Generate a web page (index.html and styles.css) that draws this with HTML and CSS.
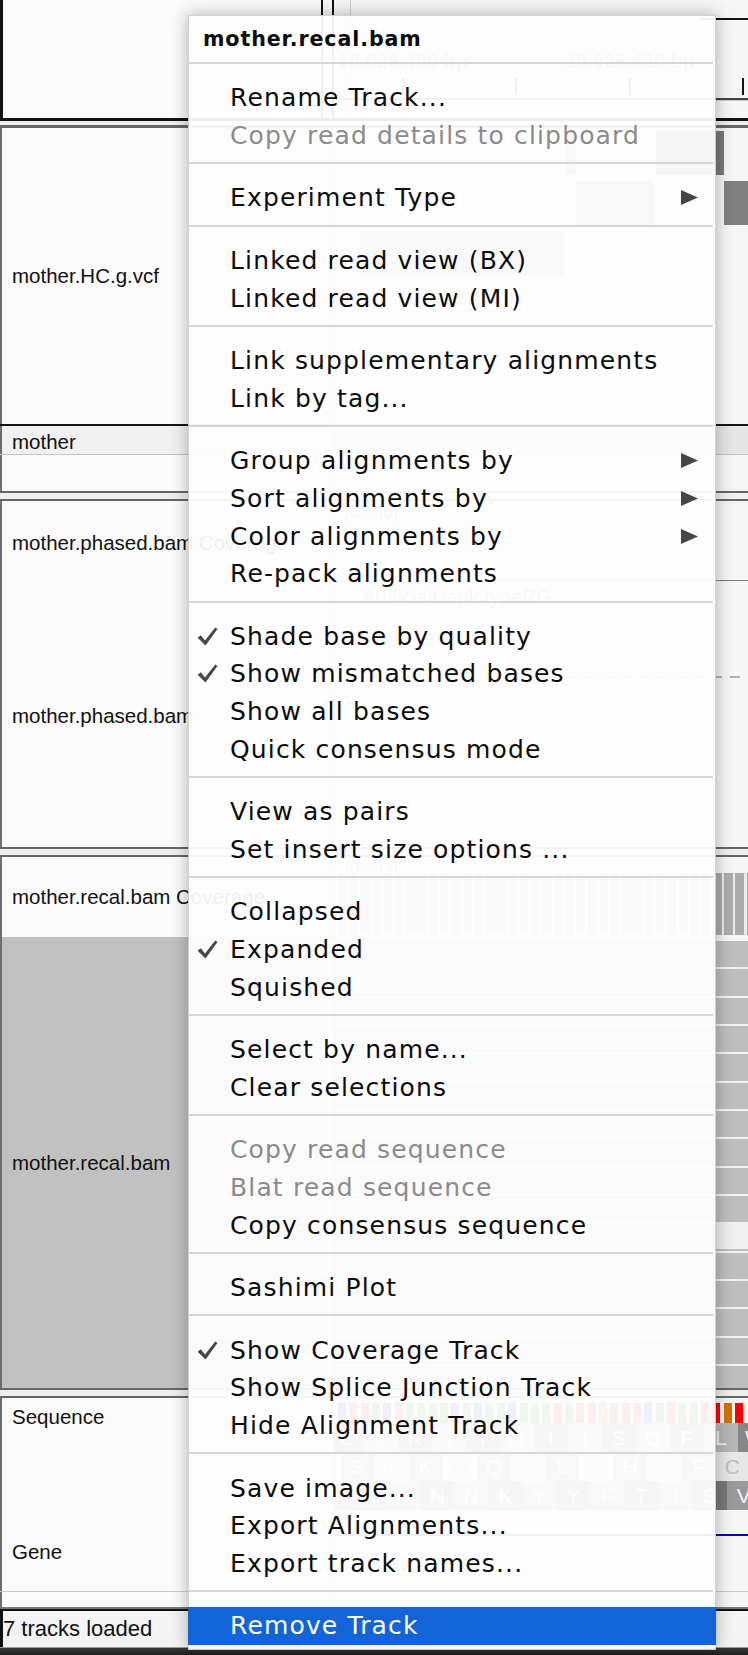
FILE: index.html
```html
<!DOCTYPE html>
<html lang="en">
<head>
<meta charset="utf-8">
<title>IGV – track menu</title>
<link rel="stylesheet" href="styles.css">
</head>
<body>
<div class="app">

  <section class="panel ruler-panel">
    <div class="track ruler-track">
      <div class="names"></div>
      <div class="attr"></div>
      <div class="data">
        <div class="data-edge"></div>
        <div class="ruler-box"></div>
        <span class="tick-label tl-1">10.026.400 bp</span>
        <span class="tick-label tl-2">10.026.420 bp</span>
        <i class="tick tk-1"></i><i class="tick tk-2"></i><i class="tick tk-3"></i><i class="tick tk-4"></i>
        <div class="ruler-line"></div>
      </div>
    </div>
  </section>
  <div class="gap gap-s"></div>

  <section class="panel vcf-panel">
    <div class="track vcf-track">
      <div class="names"><span>mother.HC.g.vcf</span></div>
      <div class="attr"></div>
      <div class="data">
        <i class="blk b1"></i><i class="blk b2"></i><i class="blk b3"></i><i class="blk b4"></i><i class="blk b5"></i>
      </div>
    </div>
    <div class="track sample-row">
      <div class="names"><span>mother</span></div>
      <div class="attr"></div>
      <div class="data"></div>
    </div>
    <div class="track blank-row">
      <div class="names"></div>
      <div class="attr"></div>
      <div class="data"></div>
    </div>
  </section>
  <div class="gap"></div>

  <section class="panel">
    <div class="track cov-track">
      <div class="names"><span>mother.phased.bam Coverage</span></div>
      <div class="attr"></div>
      <div class="data">
        <span class="range">[0 - 46]</span>
        <div class="cov-line"></div>
      </div>
    </div>
    <div class="track phased-aln">
      <div class="names"><span>mother.phased.bam</span></div>
      <div class="attr"></div>
      <div class="data">
        <span class="rg-label">ArtificialHaplotypeRG</span>
        <div class="dashed"></div>
      </div>
    </div>
  </section>
  <div class="gap"></div>

  <section class="panel">
    <div class="track recal-cov">
      <div class="names"><span>mother.recal.bam Coverage</span></div>
      <div class="attr"></div>
      <div class="data">
        <span class="range">[0 - 44]</span>
        <div class="covbars"></div>
      </div>
    </div>
    <div class="track recal-aln">
      <div class="names selected"><span>mother.recal.bam</span></div>
      <div class="attr"></div>
      <div class="data">
        <div class="reads"></div>
        <div class="read-hole"></div>
      </div>
    </div>
  </section>
  <div class="gap"></div>

  <section class="panel seq-panel">
    <div class="track seq-track">
      <div class="names top"><span>Sequence</span></div>
      <div class="attr"></div>
      <div class="data">
        <div class="bases">
          <i class="b c"></i><i class="b t"></i><i class="b t"></i><i class="b a"></i><i class="b c"></i><i class="b t"></i><i class="b a"></i><i class="b a"></i><i class="b a"></i><i class="b a"></i><i class="b c"></i><i class="b a"></i><i class="b c"></i><i class="b a"></i><i class="b a"></i><i class="b c"></i><i class="b a"></i><i class="b a"></i><i class="b a"></i><i class="b t"></i><i class="b a"></i><i class="b t"></i><i class="b t"></i><i class="b g"></i><i class="b t"></i><i class="b t"></i><i class="b t"></i><i class="b c"></i><i class="b a"></i><i class="b t"></i><i class="b a"></i><i class="b a"></i><i class="b t"></i><i class="b t"></i><i class="b g"></i><i class="b t"></i>
        </div>
        <div class="frames">
          <div class="frame f1"><span>E</span><span>L</span><span>K</span><span>T</span><span>T</span><span>N</span><span>I</span><span>I</span><span>S</span><span>Q</span><span>F</span><span>L</span><span>W</span></div>
          <div class="frame f2"><span></span><span>S</span><span>L</span><span>K</span><span>Q</span><span>Q</span><span>I</span><span>L</span><span>F</span><span>H</span><span>N</span><span>F</span><span>C</span></div>
          <div class="frame f3"><span></span><span>K</span><span>F</span><span>N</span><span>N</span><span>K</span><span>Y</span><span>Y</span><span>F</span><span>T</span><span>I</span><span>S</span><span>V</span></div>
        </div>
      </div>
    </div>
    <div class="track gene-track">
      <div class="names"><span>Gene</span></div>
      <div class="attr"></div>
      <div class="data"><div class="gene-line"></div></div>
    </div>
    <div class="track seq-tail">
      <div class="names"></div>
      <div class="attr"></div>
      <div class="data"></div>
    </div>
  </section>

  <footer class="status">
    <div class="st st1">7 tracks loaded</div>
    <div class="st st2">chr14:10.026.397</div>
    <div class="st st3"></div>
  </footer>
  <div class="desk"></div>
</div>

<div class="menu">
  <div class="mtitle">mother.recal.bam</div>
  <div class="sep"></div>
  <div class="item"><span class="gutter"></span><span class="label">Rename Track...</span></div>
  <div class="item disabled"><span class="gutter"></span><span class="label">Copy read details to clipboard</span></div>
  <div class="sep"></div>
  <div class="item"><span class="gutter"></span><span class="label">Experiment Type</span><svg class="arrow" width="17" height="15" viewBox="0 0 17 15"><polygon points="0,0 17,7.5 0,15"/></svg></div>
  <div class="sep"></div>
  <div class="item"><span class="gutter"></span><span class="label">Linked read view (BX)</span></div>
  <div class="item"><span class="gutter"></span><span class="label">Linked read view (MI)</span></div>
  <div class="sep"></div>
  <div class="item"><span class="gutter"></span><span class="label">Link supplementary alignments</span></div>
  <div class="item"><span class="gutter"></span><span class="label">Link by tag...</span></div>
  <div class="sep"></div>
  <div class="item"><span class="gutter"></span><span class="label">Group alignments by</span><svg class="arrow" width="17" height="15" viewBox="0 0 17 15"><polygon points="0,0 17,7.5 0,15"/></svg></div>
  <div class="item"><span class="gutter"></span><span class="label">Sort alignments by</span><svg class="arrow" width="17" height="15" viewBox="0 0 17 15"><polygon points="0,0 17,7.5 0,15"/></svg></div>
  <div class="item"><span class="gutter"></span><span class="label">Color alignments by</span><svg class="arrow" width="17" height="15" viewBox="0 0 17 15"><polygon points="0,0 17,7.5 0,15"/></svg></div>
  <div class="item"><span class="gutter"></span><span class="label">Re-pack alignments</span></div>
  <div class="sep"></div>
  <div class="item"><span class="gutter"><svg class="check" width="21" height="19" viewBox="0 0 20 18"><path d="M0.6 10.2 L3.6 7.8 L7.6 12.8 L17.4 0.4 L19.5 1.9 L8.1 17.5 Z"/></svg></span><span class="label">Shade base by quality</span></div>
  <div class="item"><span class="gutter"><svg class="check" width="21" height="19" viewBox="0 0 20 18"><path d="M0.6 10.2 L3.6 7.8 L7.6 12.8 L17.4 0.4 L19.5 1.9 L8.1 17.5 Z"/></svg></span><span class="label">Show mismatched bases</span></div>
  <div class="item"><span class="gutter"></span><span class="label">Show all bases</span></div>
  <div class="item"><span class="gutter"></span><span class="label">Quick consensus mode</span></div>
  <div class="sep"></div>
  <div class="item"><span class="gutter"></span><span class="label">View as pairs</span></div>
  <div class="item"><span class="gutter"></span><span class="label">Set insert size options ...</span></div>
  <div class="sep"></div>
  <div class="item"><span class="gutter"></span><span class="label">Collapsed</span></div>
  <div class="item"><span class="gutter"><svg class="check" width="21" height="19" viewBox="0 0 20 18"><path d="M0.6 10.2 L3.6 7.8 L7.6 12.8 L17.4 0.4 L19.5 1.9 L8.1 17.5 Z"/></svg></span><span class="label">Expanded</span></div>
  <div class="item"><span class="gutter"></span><span class="label">Squished</span></div>
  <div class="sep"></div>
  <div class="item"><span class="gutter"></span><span class="label">Select by name...</span></div>
  <div class="item"><span class="gutter"></span><span class="label">Clear selections</span></div>
  <div class="sep"></div>
  <div class="item disabled"><span class="gutter"></span><span class="label">Copy read sequence</span></div>
  <div class="item disabled"><span class="gutter"></span><span class="label">Blat read sequence</span></div>
  <div class="item"><span class="gutter"></span><span class="label">Copy consensus sequence</span></div>
  <div class="sep"></div>
  <div class="item"><span class="gutter"></span><span class="label">Sashimi Plot</span></div>
  <div class="sep"></div>
  <div class="item"><span class="gutter"><svg class="check" width="21" height="19" viewBox="0 0 20 18"><path d="M0.6 10.2 L3.6 7.8 L7.6 12.8 L17.4 0.4 L19.5 1.9 L8.1 17.5 Z"/></svg></span><span class="label">Show Coverage Track</span></div>
  <div class="item"><span class="gutter"></span><span class="label">Show Splice Junction Track</span></div>
  <div class="item"><span class="gutter"></span><span class="label">Hide Alignment Track</span></div>
  <div class="sep"></div>
  <div class="item"><span class="gutter"></span><span class="label">Save image...</span></div>
  <div class="item"><span class="gutter"></span><span class="label">Export Alignments...</span></div>
  <div class="item"><span class="gutter"></span><span class="label">Export track names...</span></div>
  <div class="sep"></div>
  <div class="item active"><span class="gutter"></span><span class="label">Remove Track</span></div>
</div>
</body>
</html>
```

FILE: styles.css
```css
* { box-sizing: border-box; margin: 0; padding: 0; }
html, body { width: 748px; height: 1655px; overflow: hidden; }
body {
  position: relative;
  background: #2b2b2b;
  font-family: "Liberation Sans", Arial, sans-serif;
  color: #111;
}

/* ---------- IGV window background ---------- */
.app {
  width: 748px;
  height: 1655px;
  display: flex;
  flex-direction: column;
  background: #ececec;
}
.panel { display: flex; flex-direction: column; flex: none; border-top: 2px solid #666; border-bottom: 2px solid #666; }
.gap { height: 6px; flex: none; background: #efefef; }
.gap-s { height: 4px; }
.track { display: flex; flex: none; }
.names {
  width: 321px;
  flex: none;
  display: flex;
  align-items: center;
  padding-left: 10px;
  background: #fafafa;
  border-left: 2px solid #6e6e6e;
  font-size: 20.5px;
  white-space: nowrap;
}
.names.top { align-items: flex-start; padding-top: 7px; }
.names.selected { background: #c1c1c1; }
.attr { width: 13px; flex: none; background: #f8f8f8; border-right: 1px solid #bdbdbd; }
.data { flex: 1; position: relative; overflow: hidden; background: #f6f6f6; }

/* ruler */
.ruler-panel { border-top: 0; border-bottom: 3px solid #111; }
.ruler-track { height: 118px; }
.ruler-panel .names { border-left: 3px solid #111; }
.ruler-panel .attr { border-left: 2px solid #111; border-right: 2px solid #111; background: #f7f7f7; }
.data-edge { position: absolute; left: 16px; top: 0; bottom: 0; width: 1px; background: #cfcfcf; }
.ruler-box { position: absolute; left: 366px; right: 0; top: 18px; height: 2px; background: #111; }
.tick-label {
  position: absolute; top: 50px;
  transform: translateX(-50%);
  font-size: 20px; font-weight: bold; color: #9a9a9a; white-space: nowrap;
}
.tl-1 { left: 69px; }
.tl-2 { left: 296px; }
.tick { position: absolute; top: 78px; width: 2px; height: 17px; background: #111; }
.tk-1 { left: 68px; } .tk-2 { left: 181px; } .tk-3 { left: 295px; } .tk-4 { left: 408px; }
.ruler-line { position: absolute; left: 0; right: 0; top: 98px; height: 3px; background: #444; border-bottom: 1px solid #c9c9d3; }

/* vcf */
.vcf-panel { border-top: 3px solid #666; }
.vcf-track { height: 296px; }
.blk { position: absolute; display: block; }
.b1 { left: 322px; width: 68px; top: 3px; height: 44px; background: #797979; }
.b2 { left: 232px; width: 10px; top: 3px; height: 44px; background: #a0a0a0; }
.b3 { left: 390px; width: 40px; top: 53px; height: 44px; background: #808080; }
.b4 { left: 242px; width: 78px; top: 53px; height: 44px; background: #a8a8a8; }
.b5 { left: 26px; width: 204px; top: 103px; height: 45px; background: #b4b4b4; }
.sample-row { height: 31px; border-top: 2px solid #161616; border-bottom: 1px solid #c2c2ca; }
.sample-row .names { background: #f0f0f0; padding-top: 3px; }
.sample-row .data { background: #e6e6e6; }
.blank-row { height: 36px; }

/* coverage / alignments */
.cov-track { height: 84px; }
.range { position: absolute; left: 11px; top: 2px; font-size: 17px; color: #8a8a8a; }
.cov-line { position: absolute; left: 0; right: 0; top: 79px; height: 1px; background: #7c7c7c; }
.phased-aln { height: 262px; }
.rg-label { position: absolute; left: 28px; top: 1px; font-size: 20px; color: #8a8a8a; white-space: nowrap; }
.dashed {
  position: absolute; left: 0; right: 0; top: 91px; height: 2px;
  background: repeating-linear-gradient(90deg, #b0b0b0 0 10px, transparent 10px 18px);
}
.recal-cov { height: 80px; }
.covbars {
  position: absolute; left: 4px; right: 0; top: 16px; height: 62px;
  background: repeating-linear-gradient(90deg, #ababab 0 9px, #ececec 9px 11.35px);
}
.recal-aln { height: 451px; }
.reads {
  position: absolute; left: 0; right: 0; top: 4px; bottom: 0;
  background: repeating-linear-gradient(180deg, #bebebe 0 26.3px, #f3f3f3 26.3px 28.33px);
}
.read-hole { position: absolute; left: 382px; width: 40px; top: 286px; height: 26px; background: #efefef; }

/* sequence / gene */
.seq-track { height: 114px; }
.bases { position: absolute; left: 4px; top: 5px; height: 20px; display: flex; }
.b { display: block; width: 8px; height: 20px; margin-right: 3.35px; flex: none; }
.b.a { background: #009600; }
.b.c { background: #0000ff; }
.b.g { background: #d17105; }
.b.t { background: #ff0000; }
.frames { position: absolute; left: 0; top: 25px; display: flex; flex-direction: column; }
.frame { display: flex; height: 29px; }
.frame span {
  width: 34.05px; flex: none;
  display: flex; align-items: center; justify-content: center;
  font-size: 21px; color: #f4f4f4;
}
.f1 { margin-left: -4.6px; }
.f2 { margin-left: -27.3px; }
.f3 { margin-left: -15.95px; }
.f1 span:nth-child(odd) { background: #868686; }
.f1 span:nth-child(even) { background: #b6b6b6; }
.f2 span:nth-child(odd) { background: #e7e7e7; color: #bdbdbd; }
.f2 span:nth-child(even) { background: #9c9c9c; }
.f3 span:nth-child(odd) { background: #9a9a9a; }
.f3 span:nth-child(even) { background: #787878; }
.gene-track { height: 80px; border-bottom: 1px solid #cacaca; }
.gene-line { position: absolute; left: 0; right: 0; top: 22px; height: 2px; background: #0a0aa8; }
.seq-tail { height: 15px; }
.seq-panel { border-bottom-color: #777; }

/* status bar */
.status {
  height: 39px; flex: none;
  display: flex;
  border-top: 2px solid #111;
  border-bottom: 1px solid #9a9a9a;
  background: #f3f3f3;
}
.st { display: flex; align-items: center; white-space: nowrap; }
.st1 { width: 322px; border-left: 3px solid #111; font-size: 22px; color: #111; }
.st2 { width: 292px; padding-left: 6px; font-size: 20px; color: #222; border-right: 1px solid #a0a0a0; }
.st3 { flex: 1; margin-left: 7px; border-left: 1px solid #a0a0a0; }
.desk { flex: 1; background: linear-gradient(#3a3a3a, #1e1e1e); }

/* ---------- popup menu ---------- */
.menu {
  position: absolute;
  left: 188px; top: 15px;
  width: 528px; height: 1635px;
  display: flex; flex-direction: column;
  padding-top: 8px;
  background: rgba(253, 253, 253, 0.945);
  border: 1px solid rgba(0, 0, 0, 0.17);
  box-shadow: 0 0 16px rgba(0, 0, 0, 0.3);
  font-family: "DejaVu Sans", "Liberation Sans", sans-serif;
  color: #0c0c0c;
}
.mtitle {
  height: 30px; flex: none;
  display: flex; align-items: center;
  padding-left: 14px;
  font-size: 20.6px; font-weight: bold; letter-spacing: 0.9px;
}
.sep { height: 2px; flex: none; margin: 8px 2px 15px 0; background: #d5d5d5; }
.item {
  height: 37.6px; flex: none;
  display: flex; align-items: center;
  padding: 0 17px 0 9px;
  font-size: 25px; letter-spacing: 1.15px;
  white-space: nowrap;
}
.gutter { width: 32px; flex: none; display: flex; align-items: center; }
.label { flex: 1; }
.item.disabled { color: #8b8b8b; }
.item.active { background: rgba(8, 94, 214, 0.96); color: #fff; margin: 0 -1px; padding-left: 10px; }
.check { fill: #474747; display: block; margin-left: -1px; }
.arrow { fill: #464646; display: block; flex: none; }
```
